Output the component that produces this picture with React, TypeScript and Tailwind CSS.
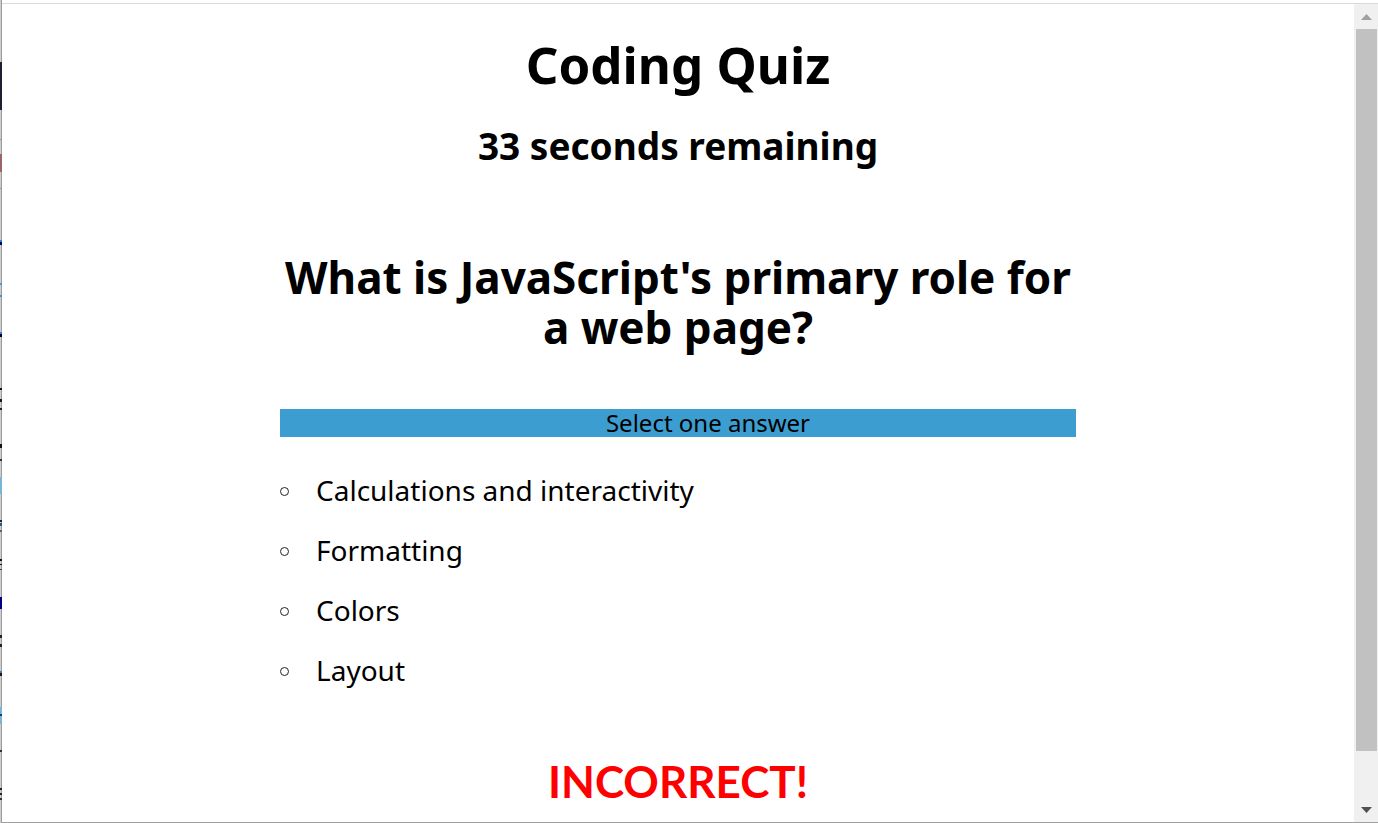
const answers = ["Calculations and interactivity", "Formatting", "Colors", "Layout"];

// Slivers of the page behind the window: top, height, colour.
const slivers: [number, number, string][] = [
  [62, 48, "#1c2030"],
  [139, 1, "#999999"],
  [154, 18, "#9a6468"],
  [188, 1, "#999999"],
  [240, 2, "#2a86c8"],
  [242, 3, "#000070"],
  [283, 2, "#5a8fc8"],
  [295, 2, "#4a90d0"],
  [332, 2, "#2a86e0"],
  [334, 3, "#000030"],
  [388, 2, "#111111"],
  [399, 3, "#1a1a1a"],
  [408, 2, "#222222"],
  [444, 4, "#1a1008"],
  [459, 2, "#333333"],
  [477, 17, "#7ab4d4"],
  [520, 2, "#222222"],
  [523, 3, "#2a5a90"],
  [530, 2, "#4a6a80"],
  [559, 2, "#111111"],
  [564, 1, "#111111"],
  [569, 1, "#444444"],
  [597, 12, "#000080"],
  [635, 3, "#222222"],
  [644, 3, "#222222"],
  [671, 2, "#2a86c8"],
  [673, 3, "#301010"],
  [707, 17, "#7ab4d4"],
  [714, 2, "#1a3a60"],
  [750, 2, "#333333"],
  [788, 2, "#222222"],
  [793, 2, "#222222"],
  [798, 2, "#333333"],
];

function WindowEdge() {
  return (
    <svg aria-hidden="true" className="h-full w-0.5 shrink-0" shapeRendering="crispEdges">
      <rect width="1" height="100%" fill="#cdcdcd" />
      <rect x="1" width="1" height="100%" fill="#9c9c9c" />
      {slivers.map(([top, height, color]) => (
        <rect key={top} y={top} width="2" height={height} fill={color} />
      ))}
    </svg>
  );
}

function ScrollRail() {
  return (
    <div className="flex w-6 shrink-0 flex-col items-center bg-[#f0f0f0] pl-px">
      <button aria-label="Scroll up" className="flex h-[25px] w-full items-center justify-center">
        <svg width="12" height="6" viewBox="0 0 12 6" fill="#a0a0a0">
          <path d="M5.5 0L11 6H0Z" />
        </svg>
      </button>
      <div className="flex min-h-0 w-full flex-1 flex-col items-center">
        <div className="h-[94%] w-[21px] bg-[#c1c1c1]" />
      </div>
      <button aria-label="Scroll down" className="flex h-[25px] w-full items-center justify-center">
        <svg width="12" height="6" viewBox="0 0 12 6" fill="#505050">
          <path d="M0 0H11L5.5 6Z" />
        </svg>
      </button>
    </div>
  );
}

export default function App() {
  return (
    <div className="flex h-screen overflow-hidden bg-white font-['Noto_Sans',sans-serif] text-black">
      <WindowEdge />
      <div className="flex min-w-0 flex-1 flex-col border-b border-[#a0a0a0] pt-[3px]">
        <div className="flex min-h-0 flex-1 border-t border-[#d9d9d9]">
          <main className="min-w-0 flex-1 overflow-hidden">
            <div className="mx-auto w-[796px] max-w-full pt-[30px] text-center">
              <h1 className="text-[51px] leading-[60px] font-bold">Coding Quiz</h1>
              <h2 className="mt-[30px] text-[37px] leading-[44px] font-bold">33 seconds remaining</h2>
              <h3 className="mt-[84px] text-[44px] leading-[50px] font-bold">
                What is JavaScript's primary role for a web page?
              </h3>
              <div className="mt-[57px] bg-[#3c9dd0] pl-[60px] text-2xl leading-7">Select one answer</div>
              <ul className="mt-[23px] text-left text-[28px] leading-[60px]">
                {answers.map((answer) => (
                  <li key={answer} className="flex items-center">
                    <svg aria-hidden="true" width="10" height="12" className="mr-[26px] shrink-0">
                      <circle cx="4.5" cy="7.5" r="4" fill="none" stroke="#222222" />
                    </svg>
                    <a href="#result">{answer}</a>
                  </li>
                ))}
              </ul>
              <p
                id="result"
                className="mt-14 font-['Lato',sans-serif] text-[44px] leading-[50px] font-bold text-[#ff0000]"
              >
                INCORRECT!
              </p>
            </div>
          </main>
          <ScrollRail />
        </div>
      </div>
    </div>
  );
}
